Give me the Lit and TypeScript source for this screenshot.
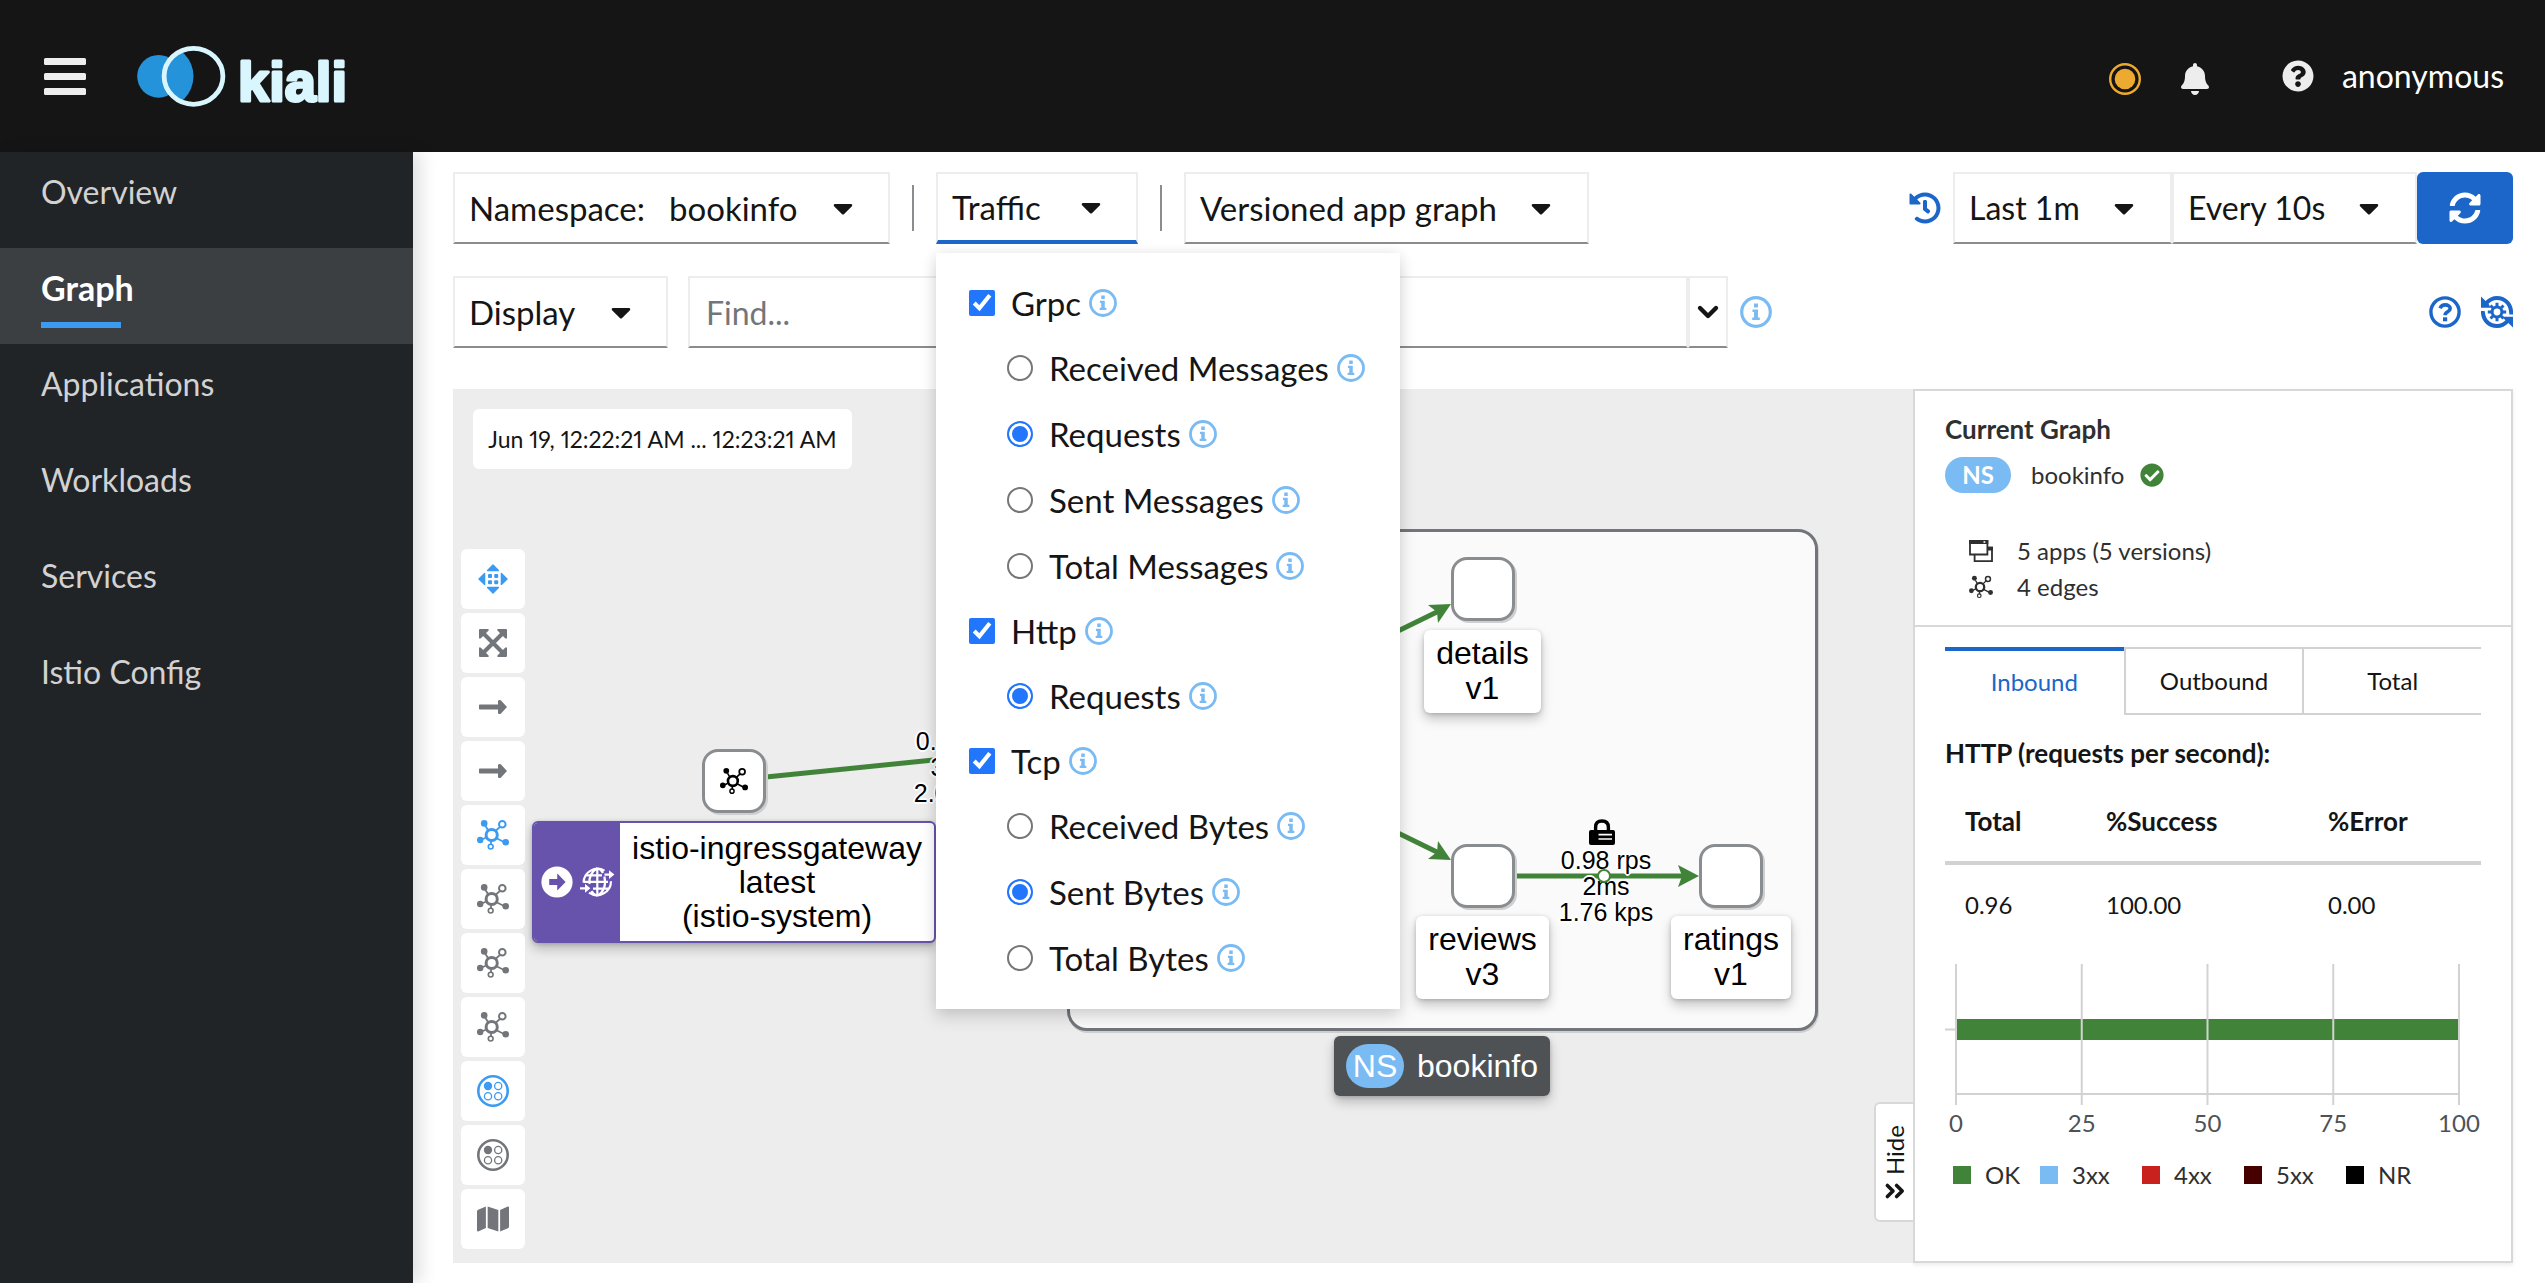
import { LitElement, html, svg, css, nothing } from "lit";
import { customElement, property } from "lit/decorators.js";
import { classMap } from "lit/directives/class-map.js";

/* ---------- icon shapes ---------- */

const topology = svg`
  <g fill="none" stroke="currentColor">
    <circle cx="14.7" cy="16" r="5.6" stroke-width="3"/>
    <circle cx="25.3" cy="5.3" r="3.3" stroke-width="2"/>
    <circle cx="13.7" cy="27.6" r="2.4" stroke-width="1.6"/>
    <path d="M19 11.5L23 7.8M10.8 10.8L8.5 7M9 18.5L5 20.5M19.5 19.2L26.5 22.8M14 22V25.5" stroke-width="1.8"/>
  </g>
  <g fill="currentColor">
    <circle cx="7.2" cy="4.4" r="3.3"/><circle cx="3.2" cy="21" r="3.2"/><circle cx="28.7" cy="23.3" r="3.3"/>
  </g>`;

const ICONS: Record<string, { box: string; body: unknown }> = {
  caret: { box: "0 0 320 512", body: svg`<path fill="currentColor" d="M31.3 192h257.3c17.8 0 26.7 21.5 14.1 34.1L174.1 354.8c-7.8 7.8-20.5 7.8-28.3 0L17.2 226.1C4.6 213.5 13.5 192 31.3 192z"/>` },
  bell: { box: "0 0 448 512", body: svg`<path fill="currentColor" d="M224 512c35.32 0 63.97-28.65 63.97-64H160.03c0 35.35 28.65 64 63.97 64zm215.39-149.71c-19.32-20.76-55.47-51.99-55.47-154.29 0-77.7-54.48-139.9-127.94-155.16V32c0-17.67-14.32-32-31.98-32s-31.98 14.33-31.98 32v20.84C118.56 68.1 64.08 130.3 64.08 208c0 102.3-36.15 133.53-55.47 154.29-6 6.45-8.66 14.16-8.61 21.71.11 16.4 12.98 32 32.1 32h383.8c19.12 0 32-15.6 32.1-32 .05-7.55-2.61-15.27-8.61-21.71z"/>` },
  help: { box: "0 0 512 512", body: svg`<path fill="currentColor" d="M504 256c0 136.997-111.043 248-248 248S8 392.997 8 256C8 119.083 119.043 8 256 8s248 111.083 248 248zM262.655 90c-54.497 0-89.255 22.957-116.549 63.758-3.536 5.286-2.353 12.415 2.715 16.258l34.699 26.31c5.205 3.947 12.621 3.008 16.665-2.122 17.864-22.658 30.113-35.797 57.303-35.797 20.429 0 45.698 13.148 45.698 32.958 0 14.976-12.363 22.667-32.534 33.976C247.128 238.528 216 254.941 216 296v4c0 6.627 5.373 12 12 12h56c6.627 0 12-5.373 12-12v-1.333c0-28.462 83.186-29.647 83.186-106.667 0-58.002-60.165-102-116.531-102zM256 338c-25.365 0-46 20.635-46 46 0 25.364 20.635 46 46 46s46-20.636 46-46c0-25.365-20.635-46-46-46z"/>` },
  sync: { box: "0 0 512 512", body: svg`<path fill="currentColor" d="M370.72 133.28C339.458 104.008 298.888 87.962 255.848 88c-77.458.068-144.328 53.178-162.791 126.85-1.344 5.363-6.122 9.15-11.651 9.15H24.103c-7.498 0-13.194-6.807-11.807-14.176C33.933 94.924 134.813 8 256 8c66.448 0 126.791 26.136 171.315 68.685L463.03 40.97C478.149 25.851 504 36.559 504 57.941V192c0 13.255-10.745 24-24 24H345.941c-21.382 0-32.09-25.851-16.971-40.971l41.75-41.749zM32 296h134.059c21.382 0 32.09 25.851 16.971 40.971l-41.75 41.75c31.262 29.273 71.835 45.319 114.876 45.28 77.418-.07 144.315-53.144 162.787-126.849 1.344-5.363 6.122-9.15 11.651-9.15h57.304c7.498 0 13.194 6.807 11.807 14.176C478.067 417.076 377.187 504 256 504c-66.448 0-126.791-26.136-171.315-68.685L48.97 471.03C33.851 486.149 8 475.441 8 454.059V320c0-13.255 10.745-24 24-24z"/>` },
  history: { box: "0 0 512 512", body: svg`<path fill="currentColor" d="M504 255.531c.253 136.64-111.18 248.372-247.82 248.468-59.015.042-113.223-20.53-155.822-54.911-11.077-8.94-11.905-25.541-1.839-35.607l11.267-11.267c8.609-8.609 22.353-9.551 31.891-1.984C173.062 425.135 212.781 440 256 440c101.705 0 184-82.311 184-184 0-101.705-82.311-184-184-184-48.814 0-93.149 18.969-126.068 49.932l50.754 50.754c10.08 10.08 2.941 27.314-11.313 27.314H24c-8.837 0-16-7.163-16-16V38.627c0-14.254 17.234-21.393 27.314-11.314l49.372 49.372C129.209 34.136 189.552 8 256 8c136.81 0 247.747 110.78 248 247.531zm-180.912 78.784l9.823-12.63c8.138-10.463 6.253-25.542-4.21-33.679L288 256.349V152c0-13.255-10.745-24-24-24h-16c-13.255 0-24 10.745-24 24v135.651l65.409 50.874c10.463 8.137 25.541 6.253 33.679-4.21z"/>` },
  map: { box: "0 0 576 512", body: svg`<path fill="currentColor" d="M0 117.66v346.32c0 11.32 11.43 19.06 21.94 14.86L160 416V32L20.12 87.95A32.006 32.006 0 0 0 0 117.66zM192 416l192 64V96L192 32v384zM554.06 33.16L416 96v384l139.88-55.95A31.996 31.996 0 0 0 576 394.34V48.02c0-11.32-11.43-19.06-21.94-14.86z"/>` },
  check: { box: "0 0 512 512", body: svg`<path fill="currentColor" d="M504 256c0 136.967-111.033 248-248 248S8 392.967 8 256 119.033 8 256 8s248 111.033 248 248zM227.314 387.314l184-184c6.248-6.248 6.248-16.379 0-22.627l-22.627-22.627c-6.248-6.249-16.379-6.249-22.628 0L216 308.118l-70.059-70.059c-6.248-6.248-16.379-6.248-22.628 0l-22.627 22.627c-6.248 6.248-6.248 16.379 0 22.627l104 104c6.249 6.249 16.379 6.249 22.628.001z"/>` },
  info: { box: "0 0 32 32", body: svg`<circle cx="16" cy="16" r="14.3" fill="none" stroke="currentColor" stroke-width="3.2"/><path fill="currentColor" d="M14 7.5h4v4h-4zM12.5 13.5h5.5v8h1.8v2.4h-7.6v-2.4H14v-5.6h-1.5z"/>` },
  helpOutline: { box: "0 0 32 32", body: svg`<circle cx="16" cy="16" r="14.1" fill="none" stroke="currentColor" stroke-width="3.4"/><path fill="none" stroke="currentColor" stroke-width="3.6" d="M11 12.2C12.3 9.6 14 8.9 16.2 8.9C19 8.9 21.2 10.3 21.2 12.6C21.2 16 16.1 15.6 16.1 19.2"/><path fill="currentColor" d="M14 21.3h4.2v4H14z"/>` },
  tour: { box: "0 0 32 32", body: svg`
    <path fill="currentColor" d="M0 0.5L4.6 5.1C7.5 2 11.5 0 16 0C24.4 0 31.3 6.3 32 14.6L32 18.5H28.4L27.9 14.5C27.2 8.5 22.3 4 16 4C12.6 4 9.6 5.4 7.5 7.7L9.6 11.8H0zM32 31.5L27.4 26.9C24.5 30 20.5 32 16 32C7.6 32 0.7 25.7 0 17.4L0 15H3.6L4.1 17.5C4.8 23.5 9.7 28 16 28C19.4 28 22.4 26.6 24.5 24.3L20.9 20.8H32z"/>
    <circle cx="16" cy="16" r="4.9" fill="none" stroke="currentColor" stroke-width="3"/>
    <path stroke="currentColor" stroke-width="3" d="M16 6.8V11M16 21V25.2M6.8 16H11M21 16H25.2M9.5 9.5L12.5 12.5M19.5 19.5L22.5 22.5M9.5 22.5L12.5 19.5M19.5 12.5L22.5 9.5"/>` },
  chevron: { box: "0 0 24 24", body: svg`<path fill="none" stroke="currentColor" stroke-width="4.4" stroke-linejoin="round" stroke-linecap="round" d="M4 8L12 16L20 8"/>` },
  status: { box: "0 0 32 32", body: svg`<circle cx="16" cy="16" r="14.8" fill="none" stroke="currentColor" stroke-width="2.4"/><circle cx="16" cy="16" r="10.3" fill="currentColor"/>` },
  menu: { box: "0 0 42 36", body: svg`<g fill="currentColor"><rect width="42" height="7" rx="1.5"/><rect y="15" width="42" height="7" rx="1.5"/><rect y="30" width="42" height="7" rx="1.5"/></g>` },
  pan: { box: "0 0 32 32", body: svg`<g fill="currentColor" stroke="currentColor" stroke-width="1.4" stroke-linejoin="round"><path d="M10.6 7.6h10.8L16 2z"/><path d="M10.6 24.4h10.8L16 30z"/><path d="M7.6 10.6v10.8L2 16z"/><path d="M24.4 10.6v10.8L30 16z"/></g><g fill="currentColor"><rect x="11" y="11" width="4" height="4" rx="1"/><rect x="17.2" y="11" width="4" height="4" rx="1"/><rect x="11" y="17.2" width="4" height="4" rx="1"/><rect x="17.2" y="17.2" width="4" height="4" rx="1"/></g>` },
  expand: { box: "0 0 32 32", body: svg`<path stroke="currentColor" stroke-width="4" d="M6 6L26 26M26 6L6 26"/><path fill="currentColor" d="M2 3a1 1 0 0 1 1-1h8.6v1.6L3.6 11.6H2zM30 3a1 1 0 0 0-1-1h-8.6v1.6L28.4 11.6H30zM2 29a1 1 0 0 0 1 1h8.6v-1.6L3.6 20.4H2zM30 29a1 1 0 0 1-1 1h-8.6v-1.6L28.4 20.4H30z"/>` },
  arrow: { box: "0 0 32 32", body: svg`<path fill="currentColor" d="M2.8 13.4H21V9.8q1-1.4 2.8-.6L30 16l-6.2 6.8q-1.8.8-2.8-.6V18.6H2.8q-.8 0-.8-.8v-3.6q0-.8.8-.8z"/>` },
  topology: { box: "0 0 32 32", body: topology },
  boxes: { box: "0 0 32 32", body: svg`<g fill="none" stroke="currentColor"><circle cx="16" cy="16" r="14.7" stroke-width="2.6"/><g stroke-width="1.3"><circle cx="21.2" cy="11" r="3.6"/><circle cx="11" cy="21.2" r="3.6"/><circle cx="21.2" cy="21.2" r="3.6"/></g></g><circle cx="11" cy="11" r="4.2" fill="currentColor"/>` },
  apps: { box: "0 0 24 24", body: svg`<g fill="none" stroke="currentColor" stroke-width="1.8"><path d="M1 2v13.5h17.4V2z"/><path d="M5.6 15.5v6.6H23V8.6h-4.6"/></g><path fill="currentColor" d="M0 1h19.3v4H0zM18.4 7.8H24v3.6h-5.6z"/><rect x="14.5" y="2.2" width="1.8" height="1.6" fill="#fff"/>` },
  gateOut: { box: "0 0 32 32", body: svg`<circle cx="16" cy="16" r="15.6" fill="currentColor"/><path fill="#6753ac" d="M8.2 13h8V8.2q0-.8.6-.2L24.6 16L16.8 24q-.6.6-.6-.2V19h-8z"/>` },
  globe: { box: "0 0 34 32", body: svg`<g fill="none" stroke="currentColor" stroke-width="2.2"><path d="M24.5 4.6A14 14 0 0 0 3.6 16.5M9 26.6A14 14 0 0 0 31 15.2M3.5 15.8H28M5.5 9.4H22M13 22.6H29M17.3 2V30M17.3 2C9.5 7 9 14 9.6 18M17.3 30C25 25 25.8 17 24.4 10.5M17.3 2C20 3 22 5 23 7M17.3 30C14.5 29 12.5 27 11.5 25"/><path d="M24.5 8.6H31M0 22.3H7"/></g><path fill="currentColor" d="M29 4.2L34.4 8.6L29 13zM5 17.8L10.4 22.3L5 26.8z"/>` },
  lock: { box: "0 0 26 26", body: svg`<path fill="none" stroke="currentColor" stroke-width="3.4" d="M6.6 12V8.2Q6.6 2 13 2Q19.4 2 19.4 8.2V12"/><rect y="11" width="26" height="15" rx="2" fill="currentColor"/><path stroke="#fff" stroke-width="1.6" d="M9.5 15.6H23M9.5 20H23"/>` },
  doubleRight: { box: "0 0 20 16", body: svg`<path fill="none" stroke="currentColor" stroke-width="3.6" stroke-linejoin="round" stroke-linecap="round" d="M2.4 2.4L8 8L2.4 13.6M11.6 2.4L17.2 8L11.6 13.6"/>` },
};

@customElement("ui-icon")
class UiIcon extends LitElement {
  @property() name = "info";
  static styles = css`
    :host { display: block; flex: none; width: 32px; height: 32px; }
    .shape { display: block; width: 100%; height: 100%; overflow: visible; }
  `;
  render() {
    const icon = ICONS[this.name];
    return html`<svg class="shape" viewBox=${icon.box} aria-hidden="true">${icon.body}</svg>`;
  }
}

/* ---------- data ---------- */

const NAV = ["Overview", "Graph", "Applications", "Workloads", "Services", "Istio Config"];

const TRAFFIC = [
  { name: "Grpc", options: ["Received Messages", "Requests", "Sent Messages", "Total Messages"], picked: "Requests" },
  { name: "Http", options: ["Requests"], picked: "Requests" },
  { name: "Tcp", options: ["Received Bytes", "Sent Bytes", "Total Bytes"], picked: "Sent Bytes" },
];

const TOOLS = [
  { icon: "pan", on: true }, { icon: "expand" }, { icon: "arrow" }, { icon: "arrow" },
  { icon: "topology", on: true }, { icon: "topology" }, { icon: "topology" }, { icon: "topology" },
  { icon: "boxes", on: true }, { icon: "boxes" }, { icon: "map" },
];

const LEGEND = [
  ["OK", "ok"], ["3xx", "redirect"], ["4xx", "client"], ["5xx", "server"], ["NR", "none"],
];

@customElement("app-root")
class AppRoot extends LitElement {
  static styles = css`
    :host {
      display: block;
      --sans: Lato, "Open Sans", sans-serif;
      --graph: "Liberation Sans", Arial, sans-serif;
      --blue: #1c66c9;
      --sky: #7abbf3;
      --green: #418439;
      --ink: #151515;
      font-family: var(--sans);
      font-size: 32px;
      line-height: 48px;
      color: var(--ink);
    }
    * { box-sizing: border-box; }
    button, input, select { font: inherit; color: inherit; margin: 0; }
    button { background: none; border: 0; padding: 0; cursor: pointer; }
    .page { min-height: 100vh; display: grid; grid-template: auto 1fr / 413px minmax(0, 1fr); background: #fff; }

    .masthead { grid-column: 1 / -1; height: 152px; display: flex; align-items: center; gap: 51px; padding: 0 41px 0 44px; background: var(--ink); color: #ededed; }
    .burger { width: 42px; height: 36px; }
    .logo { width: 212px; height: 64px; overflow: visible; }
    .word { font: 700 56px "Liberation Sans", sans-serif; fill: #d9f6ff; stroke: #d9f6ff; stroke-width: 3px; stroke-linejoin: round; }
    .tools { margin-left: auto; display: flex; align-items: center; }
    .alerts { display: flex; align-items: center; gap: 40px; padding-top: 6px; margin-right: 73px; }
    .status { color: #edaa30; }
    .bell { width: 28px; }
    .user { margin-left: 28px; color: #fff; }

    .side { background: #212427; box-shadow: 8px 0 16px rgba(3, 3, 3, 0.12); z-index: 1; }
    .nav { list-style: none; margin: 0; padding: 0; }
    .link { display: block; height: 96px; padding: 16px 41px 0; color: #d2d2d2; text-decoration: none; }
    .link.on { background: #3c3f42; color: #fff; font-size: 34px; font-weight: 700; }
    .link.on::after { content: ""; display: block; width: 80px; height: 6px; margin-top: 10px; background: #3c9af0; }

    .main { display: flex; flex-direction: column; padding: 20px 32px 20px 40px; }
    .bar { display: flex; align-items: center; height: 72px; }
    .bar + .bar { margin: 32px 0 41px; }
    .rule { width: 2px; height: 46px; margin: 0 22px; background: #8a8d90; }
    .push { margin-left: auto; }
    .field { border: 2px solid #ededed; border-bottom-color: #8a8d90; background: #fff; height: 72px; }
    .toggle { display: flex; align-items: center; justify-content: space-between; padding: 0 35px 0 14px; font-size: 33px; white-space: nowrap; text-align: left; }
    .toggle.open { border-bottom: 4px solid var(--blue); }
    .caret { width: 20px; }
    .ns { width: 437px; }
    .ns-name { margin-left: 24px; }
    .traffic { width: 202px; }
    .display { width: 215px; }
    .pick { display: grid; align-items: center; }
    .pick > * { grid-area: 1 / 1; }
    .pick .caret { justify-self: end; margin-right: 36px; pointer-events: none; }
    .select { appearance: none; border: 0; background: none; width: 100%; height: 100%; padding: 0 0 0 14px; outline: none; }
    .kind { width: 405px; font-size: 33px; }
    .last { width: 219px; }
    .every { width: 245px; }
    .blue { color: var(--blue); }
    .sky { color: var(--sky); }
    .history { margin-right: 12px; }
    .refresh { width: 96px; height: 72px; border-radius: 6px; background: var(--blue); color: #fff; display: grid; place-items: center; }
    .find { width: 1000px; margin-left: 20px; padding: 0 16px; outline: none; border-radius: 0; }
    .find::placeholder { color: #72767b; opacity: 1; }
    .more { width: 40px; display: grid; place-items: center; margin-right: 12px; }
    .more-icon { width: 24px; height: 24px; }
    .pair { display: flex; gap: 20px; }

    .drop { position: relative; }
    .menu { position: absolute; top: 81px; left: 0; z-index: 5; width: 464px; padding: 18px 33px; background: #fff; font-size: 33px; box-shadow: 0 8px 16px rgba(3, 3, 3, 0.14), 0 0 12px rgba(3, 3, 3, 0.07); }
    .row { display: flex; align-items: center; height: 64px; white-space: nowrap; }
    .row.sub { height: 66px; padding-left: 38px; }
    .opt { display: flex; align-items: center; gap: 16px; }
    .tick { width: 26px; height: 26px; accent-color: #2176fb; }
    .radio { appearance: none; width: 26px; height: 26px; border: 2px solid #767676; border-radius: 50%; }
    .radio:checked { border-color: #2176fb; background: #2176fb; box-shadow: inset 0 0 0 3px #fff; }
    .hint { width: 28px; height: 28px; margin-left: 8px; color: var(--sky); }

    .stage { flex: 1; display: flex; min-height: 874px; }
    .canvas { position: relative; flex: 1; background: #ededed; }
    .edges { position: absolute; left: 0; top: 0; width: 1461px; height: 874px; }
    .time { position: absolute; left: 20px; top: 20px; padding: 0 8px; min-width: 379px; height: 60px; line-height: 60px; text-align: center; font-size: 23px; font-variant-numeric: proportional-nums; background: #fff; border-radius: 6px; white-space: nowrap; }
    .toolbox { position: absolute; left: 8px; bottom: 14px; display: flex; flex-direction: column; gap: 4px; }
    .tool { width: 64px; height: 60px; display: grid; place-items: center; background: #fff; border-radius: 6px; color: #72767b; }
    .tool.on { color: #3c9af0; }
    .node { position: absolute; width: 64px; height: 64px; border: 3px solid #8a8d90; border-radius: 16px; background: #fff; box-shadow: 2px 2px 0 #cfcfcf; display: grid; place-items: center; color: #000; }
    .node-icon { width: 28px; height: 28px; }
    .tag { position: absolute; font-family: var(--graph); line-height: 35px; text-align: center; color: #000; background: #fff; border-radius: 6px; padding: 6px 0 7px; box-shadow: 0 6px 12px rgba(3, 3, 3, 0.22), 0 1px 4px rgba(3, 3, 3, 0.18); }
    .flow { position: absolute; width: 120px; text-align: center; font: 25px/26px var(--graph); color: #000; text-shadow: 2px 0 #fff, -2px 0 #fff, 0 2px #fff, 0 -2px #fff, 1px 1px #fff, -1px -1px #fff, 1px -1px #fff, -1px 1px #fff; }
    .group { position: absolute; left: 614px; top: 140px; width: 751px; height: 502px; border: 3px solid #72767b; border-radius: 20px; background: #fafafa; box-shadow: 1px 2px 0 #cfcfcf; }
    .n-gate { left: 249px; top: 360px; }
    .n-details { left: 998px; top: 168px; }
    .n-reviews { left: 998px; top: 455px; }
    .n-ratings { left: 1246px; top: 455px; }
    .t-details { left: 971px; top: 241px; width: 117px; }
    .t-reviews { left: 963px; top: 527px; width: 133px; }
    .t-ratings { left: 1218px; top: 527px; width: 120px; }
    .t-gate { left: 79px; top: 432px; width: 404px; height: 122px; padding: 0; display: grid; grid-template-columns: 86px 1fr; align-items: center; border: 2px solid #6753ac; line-height: 34px; overflow: hidden; }
    .gate-icons { display: flex; align-items: center; justify-content: center; gap: 7px; align-self: stretch; background: #6753ac; color: #fff; }
    .globe { width: 34px; }
    .t-ns { left: 881px; top: 647px; width: 216px; height: 60px; padding: 0 12px; display: flex; align-items: center; justify-content: space-between; background: #4f5255; color: #fff; }
    .ns-pill { width: 58px; height: 44px; line-height: 44px; border-radius: 22px; background: var(--sky); }
    .f-in { left: 448px; top: 339px; }
    .f-out { left: 1093px; top: 458px; }
    .dot { position: absolute; left: 1144px; top: 480px; width: 14px; height: 14px; border: 2px solid var(--green); border-radius: 50%; background: #fff; }
    .lock { position: absolute; left: 1136px; top: 430px; width: 26px; height: 26px; color: #000; }
    .hide { position: absolute; right: 0; bottom: 41px; width: 39px; height: 120px; display: flex; flex-direction: column; align-items: center; justify-content: center; gap: 8px; background: #fff; border: 2px solid #d8d8d8; border-right: 0; border-radius: 6px 0 0 6px; font-size: 24px; line-height: 36px; }
    .hide-text { writing-mode: vertical-rl; transform: rotate(180deg); }
    .hide-icon { width: 20px; height: 16px; }

    .panel { width: 600px; border: 2px solid #d8d8d8; background: #fff; font-size: 24px; line-height: 36px; box-shadow: 0 2px 4px rgba(3, 3, 3, 0.08); }
    .summary { padding: 20px 30px 20px; border-bottom: 2px solid #d8d8d8; color: #2f2f2f; }
    .title { margin: 0; font-size: 26px; line-height: 36px; font-weight: 700; }
    .who { display: flex; align-items: center; margin: 10px 0 40px; }
    .badge { width: 66px; height: 36px; border-radius: 18px; background: var(--sky); color: #fff; text-align: center; margin-right: 20px; font-weight: 700; }
    .good { width: 24px; height: 24px; margin-left: 16px; color: var(--green); }
    .fact { display: flex; align-items: center; gap: 24px; padding-left: 24px; }
    .fact-icon { width: 24px; height: 24px; }
    .detail { padding: 20px 30px; }
    .tabs { display: grid; grid-template-columns: repeat(3, 1fr); margin-bottom: 20px; }
    .tab { height: 68px; border: solid #d2d2d2; border-width: 2px 0 2px 2px; }
    .tab.on { border: 0; border-top: 4px solid var(--blue); color: var(--blue); padding-bottom: 2px; }
    .table { width: 100%; table-layout: fixed; border-collapse: collapse; }
    .c1 { width: 141px; }
    .c2 { width: 222px; }
    .cell { text-align: left; padding: 22px 20px; }
    .head { padding: 32px 20px 22px; border-bottom: 4px solid #d2d2d2; font-size: 26px; }
    .chart { display: block; width: 100%; margin-top: 8px; }
    .tick-label { font: 24px Lato, sans-serif; fill: #4f5255; text-anchor: middle; }
    .legend { display: grid; grid-template-columns: 87px repeat(4, 102px); list-style: none; margin: 8px 0 0; padding: 0 0 0 8px; }
    .key { display: flex; align-items: center; gap: 14px; color: #2f2f2f; }
    .key::before { content: ""; width: 18px; height: 18px; background: #000; }
    .key.ok::before { background: var(--green); }
    .key.redirect::before { background: var(--sky); }
    .key.client::before { background: #c9211e; }
    .key.server::before { background: #470000; }
  `;

  private pick(kind: string, value: string, label: string) {
    return html`<label class="field pick ${kind}">
      <select class="select" aria-label=${label}><option>${value}</option></select>
      <ui-icon class="caret" name="caret"></ui-icon>
    </label>`;
  }

  private masthead() {
    return html`<header class="masthead">
      <button aria-label="Menu"><ui-icon class="burger" name="menu"></ui-icon></button>
      <svg class="logo" viewBox="137 44 212 64" role="img" aria-label="kiali">
        <clipPath id="ring"><circle cx="193.5" cy="76.3" r="28"/></clipPath>
        <circle cx="158.6" cy="76.3" r="21.4" fill="#2493da"/>
        <ellipse cx="193.5" cy="76.3" rx="30" ry="28.5" fill="#151515"/>
        <circle cx="161.5" cy="76.3" r="32" fill="#2493da" clip-path="url(#ring)"/>
        <ellipse cx="193.5" cy="76.3" rx="29.4" ry="28" fill="none" stroke="#d9f6ff" stroke-width="4.8"/>
        <text class="word" x="238" y="101">kiali</text>
      </svg>
      <div class="tools">
        <div class="alerts">
          <ui-icon class="status" name="status"></ui-icon>
          <ui-icon class="bell" name="bell"></ui-icon>
        </div>
        <ui-icon name="help"></ui-icon>
        <span class="user">anonymous</span>
      </div>
    </header>`;
  }

  private trafficMenu() {
    return html`<div class="menu">
      ${TRAFFIC.map(
        (group) => html`<div class="row">
            <label class="opt"><input class="tick" type="checkbox" checked />${group.name}</label>
            <ui-icon class="hint" name="info"></ui-icon>
          </div>
          ${group.options.map(
            (option) => html`<div class="row sub">
              <label class="opt"><input class="radio" type="radio" name=${group.name} ?checked=${option === group.picked} />${option}</label>
              <ui-icon class="hint" name="info"></ui-icon>
            </div>`
          )}`
      )}
    </div>`;
  }

  private graph() {
    return html`<div class="canvas">
      <div class="group"></div>
      <svg class="edges" viewBox="0 0 1461 874" aria-hidden="true">
        <g stroke="#418439" stroke-width="5" fill="none">
          <path d="M313 388L520 367M900 264L990 220M900 422L990 466M1062 487H1236"/>
        </g>
        <g fill="#418439">
          <path d="M998 215L985 234L984 223L975 216z"/>
          <path d="M998 471L975 470L984 463L985 452z"/>
          <path d="M1246 487L1225 498L1229 487L1225 476z"/>
        </g>
      </svg>
      <div class="flow f-in">0.96 rps<br />30ms<br />2.06 kps</div>
      <div class="flow f-out">0.98 rps<br />2ms<br />1.76 kps</div>
      <span class="dot"></span>
      <ui-icon class="lock" name="lock"></ui-icon>
      <div class="node n-gate"><ui-icon class="node-icon" name="topology"></ui-icon></div>
      <div class="node n-details"></div>
      <div class="node n-reviews"></div>
      <div class="node n-ratings"></div>
      <div class="tag t-gate">
        <div class="gate-icons"><ui-icon name="gateOut"></ui-icon><ui-icon class="globe" name="globe"></ui-icon></div>
        <div>istio-ingressgateway<br />latest<br />(istio-system)</div>
      </div>
      <div class="tag t-details">details<br />v1</div>
      <div class="tag t-reviews">reviews<br />v3</div>
      <div class="tag t-ratings">ratings<br />v1</div>
      <div class="tag t-ns"><span class="ns-pill">NS</span><span>bookinfo</span></div>
      <div class="time">Jun 19, 12:22:21 AM ... 12:23:21 AM</div>
      <div class="toolbox">
        ${TOOLS.map(
          (t) => html`<button class=${classMap({ tool: true, on: !!t.on })} aria-label=${t.icon}><ui-icon name=${t.icon}></ui-icon></button>`
        )}
      </div>
      <button class="hide"><span class="hide-text">Hide</span><ui-icon class="hide-icon" name="doubleRight"></ui-icon></button>
    </div>`;
  }

  private chart() {
    const marks = [0, 25, 50, 75, 100].map((v) => ({ v, x: 11 + v * 5.03 }));
    return html`<svg class="chart" viewBox="0 0 536 196" role="img" aria-label="Response codes">
      <rect x="12" y="66" width="502" height="21" fill="#418439"/>
      <path d="M0 76.5H11M11 141H515" stroke="#d2d2d2" stroke-width="2"/>
      ${marks.map(
        (m) => svg`<path d="M${m.x} 11V152" stroke="#d2d2d2" stroke-width="2"/>
          <text class="tick-label" x=${m.x} y="179">${m.v}</text>`
      )}
    </svg>`;
  }

  private panel() {
    return html`<aside class="panel">
      <section class="summary">
        <h2 class="title">Current Graph</h2>
        <div class="who"><span class="badge">NS</span>bookinfo<ui-icon class="good" name="check"></ui-icon></div>
        <div class="fact"><ui-icon class="fact-icon" name="apps"></ui-icon>5 apps (5 versions)</div>
        <div class="fact"><ui-icon class="fact-icon" name="topology"></ui-icon>4 edges</div>
      </section>
      <section class="detail">
        <div class="tabs" role="tablist">
          ${["Inbound", "Outbound", "Total"].map(
            (t, i) => html`<button class=${classMap({ tab: true, on: i === 0 })} role="tab" aria-selected=${i === 0}>${t}</button>`
          )}
        </div>
        <h3 class="title">HTTP (requests per second):</h3>
        <table class="table">
          <colgroup><col class="c1" /><col class="c2" /><col /></colgroup>
          <thead><tr>${["Total", "%Success", "%Error"].map((h) => html`<th class="cell head">${h}</th>`)}</tr></thead>
          <tbody><tr>${["0.96", "100.00", "0.00"].map((c) => html`<td class="cell">${c}</td>`)}</tr></tbody>
        </table>
        ${this.chart()}
        <ul class="legend">${LEGEND.map(([name, cls]) => html`<li class="key ${cls}">${name}</li>`)}</ul>
      </section>
    </aside>`;
  }

  render() {
    return html`<div class="page">
      ${this.masthead()}
      <nav class="side"><ul class="nav">
        ${NAV.map((n) => html`<li><a class=${classMap({ link: true, on: n === "Graph" })} href="#" aria-current=${n === "Graph" ? "page" : nothing}>${n}</a></li>`)}
      </ul></nav>
      <main class="main">
        <div class="bar">
          <button class="field toggle ns"><span>Namespace:<span class="ns-name">bookinfo</span></span><ui-icon class="caret" name="caret"></ui-icon></button>
          <span class="rule"></span>
          <div class="drop">
            <button class="field toggle traffic open" aria-expanded="true">Traffic<ui-icon class="caret" name="caret"></ui-icon></button>
            ${this.trafficMenu()}
          </div>
          <span class="rule"></span>
          ${this.pick("kind", "Versioned app graph", "Graph type")}
          <ui-icon class="push history blue" name="history"></ui-icon>
          ${this.pick("last", "Last 1m", "Duration")}${this.pick("every", "Every 10s", "Refresh interval")}
          <button class="refresh" aria-label="Refresh"><ui-icon name="sync"></ui-icon></button>
        </div>
        <div class="bar">
          <button class="field toggle display">Display<ui-icon class="caret" name="caret"></ui-icon></button>
          <input class="field find" type="text" placeholder="Find..." aria-label="Find" />
          <button class="field more" aria-label="Presets"><ui-icon class="more-icon" name="chevron"></ui-icon></button>
          <ui-icon class="sky" name="info"></ui-icon>
          <div class="pair push blue"><ui-icon name="helpOutline"></ui-icon><ui-icon name="tour"></ui-icon></div>
        </div>
        <div class="stage">${this.graph()}${this.panel()}</div>
      </main>
    </div>`;
  }
}
